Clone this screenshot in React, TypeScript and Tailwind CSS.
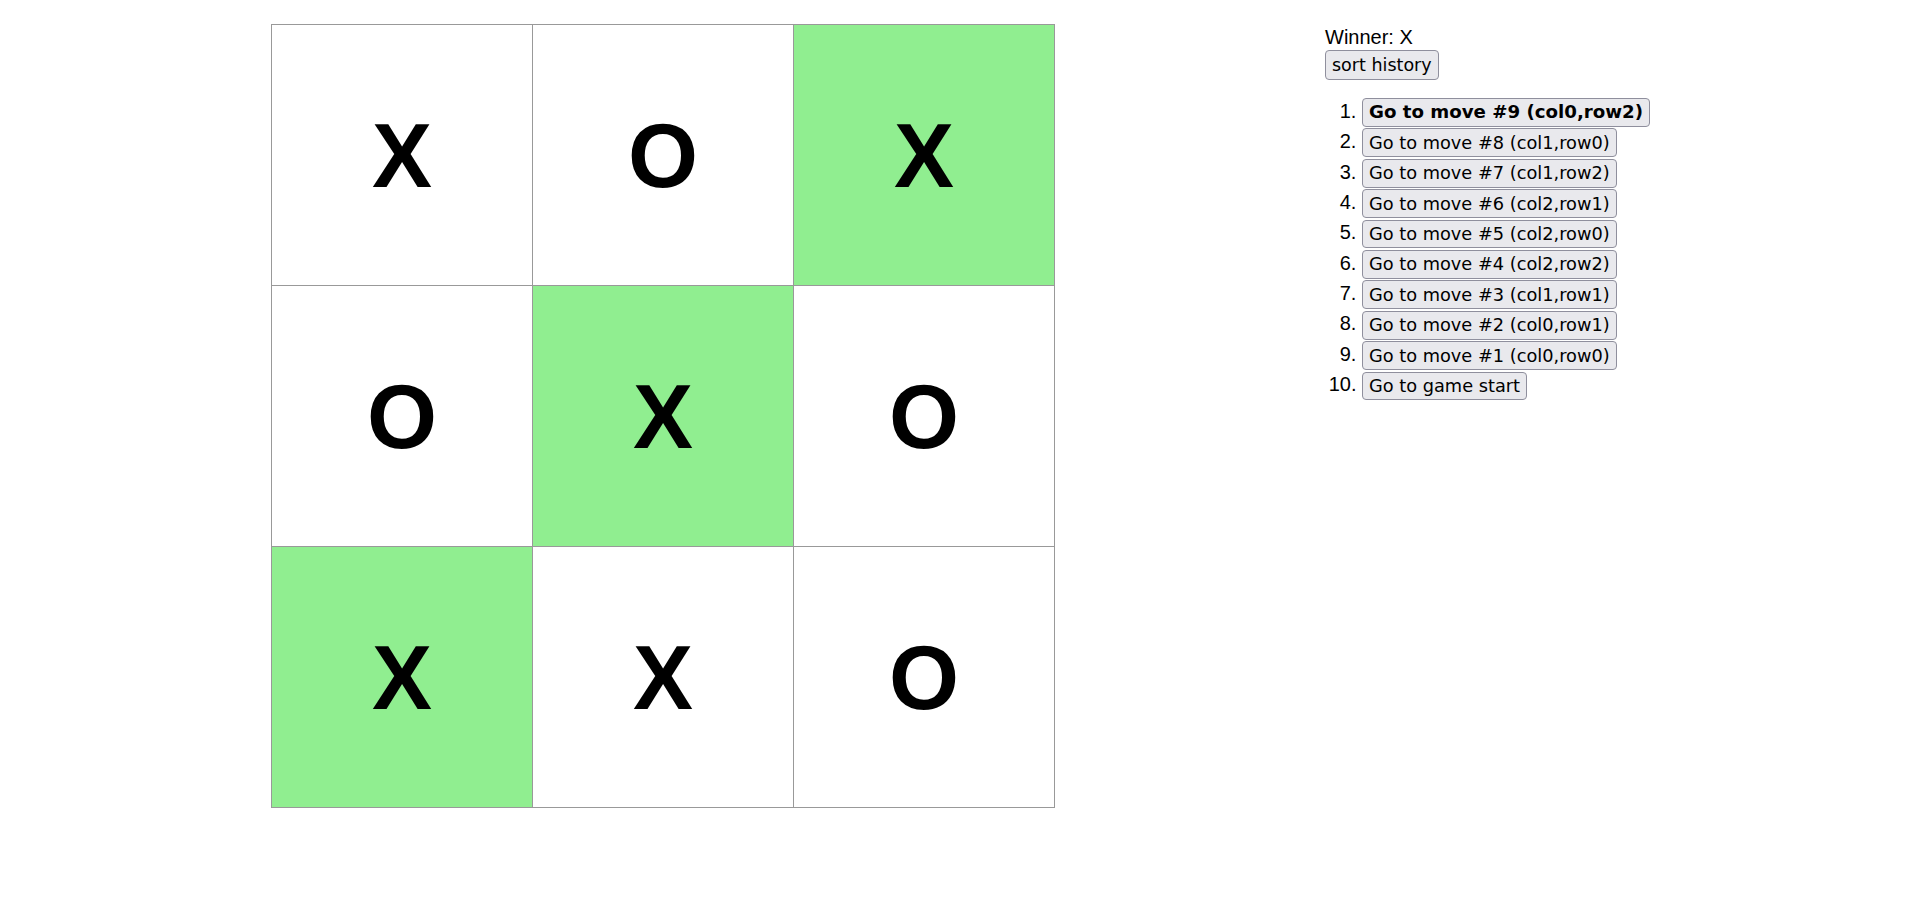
import { useState } from 'react';

type Cell = 'X' | 'O' | null;

const BOARD: Cell[] = ['X', 'O', 'X', 'O', 'X', 'O', 'X', 'X', 'O'];
const WIN_LINE = [2, 4, 6];

const MOVES = [
  'Go to move #9 (col0,row2)',
  'Go to move #8 (col1,row0)',
  'Go to move #7 (col1,row2)',
  'Go to move #6 (col2,row1)',
  'Go to move #5 (col2,row0)',
  'Go to move #4 (col2,row2)',
  'Go to move #3 (col1,row1)',
  'Go to move #2 (col0,row1)',
  'Go to move #1 (col0,row0)',
  'Go to game start',
];

const btn =
  'inline-block bg-[#e9e9ed] border border-[#8f8f9d] rounded-[4px] px-[6px] text-black font-["DejaVu_Sans",sans-serif] leading-[26px] align-middle';

export default function App() {
  const [current] = useState(0);

  return (
    <div className='flex items-start bg-white min-h-[923px] pt-[24px] pl-[271px] gap-[270px] font-["Liberation_Sans",Arial,sans-serif] text-black'>
      {/* board */}
      <div className="grid grid-cols-[repeat(3,261px)] border-l border-t border-[#999]">
        {BOARD.map((v, i) => (
          <div
            key={i}
            className={`h-[261px] flex items-center justify-center border-r border-b border-[#999] text-[90px] font-bold leading-none ${
              WIN_LINE.includes(i) ? 'bg-[#90ee90]' : 'bg-white'
            }`}
          >
            <span className="pt-[2px]">{v}</span>
          </div>
        ))}
      </div>

      {/* game info */}
      <div className="pt-[2px] text-[20px]">
        <div className="leading-[22px]">Winner: X</div>
        <button className={`${btn} text-[17.5px] h-[30px]`}>sort history</button>
        <ol className="list-decimal list-outside pl-[37px] mt-[17px]">
          {MOVES.map((m, i) => (
            <li key={i} className="h-[30.4px] leading-[29px]">
              <button
                className={`${btn} h-[28.7px] ${i === current ? 'font-bold text-[18.2px]' : 'text-[17.75px]'}`}
              >
                {m}
              </button>
            </li>
          ))}
        </ol>
      </div>
    </div>
  );
}
